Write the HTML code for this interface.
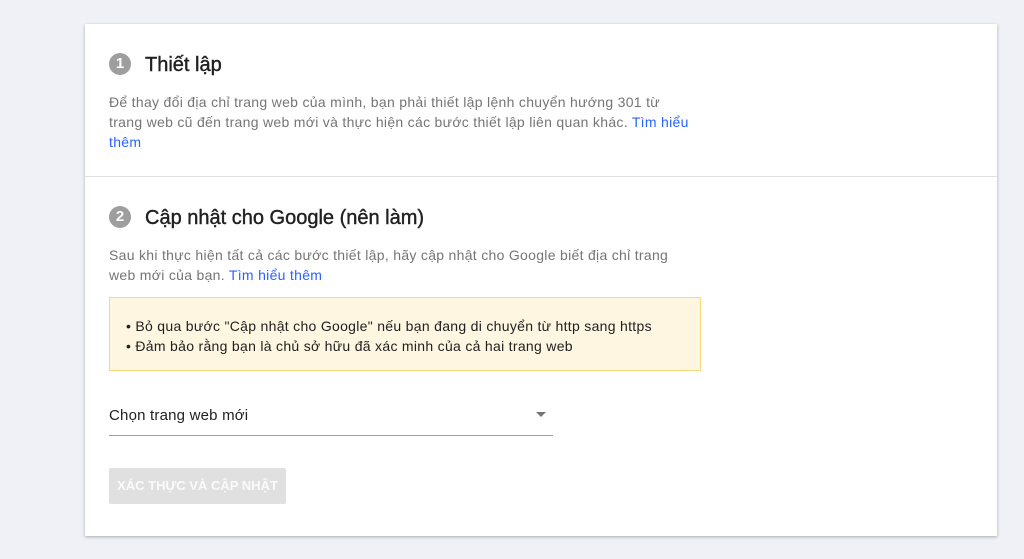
<!DOCTYPE html>
<html><head><meta charset="utf-8"><style>
*{margin:0;padding:0;box-sizing:border-box}
body{width:1024px;height:559px;background:#eff1f6;font-family:"Liberation Sans",Roboto,sans-serif;position:relative;overflow:hidden}
.card{position:absolute;left:85px;top:24px;width:912px;height:512px;background:#fff;box-shadow:0 1px 3px rgba(0,0,0,.3)}
.div{position:absolute;left:0;right:0;top:152px;height:1px;background:#e0e0e0}
.num{position:absolute;width:22px;height:22px;border-radius:50%;background:#9e9e9e;color:#fff;font-size:15px;font-weight:bold;text-align:center;line-height:22px}
.h{position:absolute;font-size:20px;color:#212121;-webkit-text-stroke:0.4px #212121;white-space:nowrap}
.p{position:absolute;left:24px;width:700px;font-size:14px;line-height:20px;color:#757575;letter-spacing:0.3px;white-space:nowrap}
a{color:#2962ff;text-decoration:none}
.warn{position:absolute;left:24px;top:273px;width:592px;height:74px;background:#fef6e0;border:1px solid #f9d97d;padding:18px 0 0 16px;font-size:14px;line-height:20px;color:#212121;letter-spacing:0.3px}
.sel{position:absolute;left:24px;top:380px;width:444px;height:32px;border-bottom:1px solid #9e9e9e;font-size:15px;color:#212121;letter-spacing:0.2px}
.arr{position:absolute;right:7px;top:8px;width:0;height:0;border-left:5px solid transparent;border-right:5px solid transparent;border-top:5px solid #757575}
.btn{position:absolute;left:24px;top:444px;width:177px;height:36px;background:#e0e0e0;border-radius:2px;color:#fafafa;font-size:13px;font-weight:bold;text-align:center;line-height:36px}
</style></head><body>
<div class="card">
<div class="num" style="left:24px;top:29px">1</div>
<div class="h" style="left:60px;top:30px">Thiết lập</div>
<div class="p" style="top:68px">Để thay đổi địa chỉ trang web của mình, bạn phải thiết lập lệnh chuyển hướng 301 từ<br>trang web cũ đến trang web mới và thực hiện các bước thiết lập liên quan khác. <a>Tìm hiểu</a><br><a>thêm</a></div>
<div class="div"></div>
<div class="num" style="left:24px;top:182px">2</div>
<div class="h" style="left:60px;top:183px">Cập nhật cho Google (nên làm)</div>
<div class="p" style="top:221px">Sau khi thực hiện tất cả các bước thiết lập, hãy cập nhật cho Google biết địa chỉ trang<br>web mới của bạn. <a>Tìm hiểu thêm</a></div>
<div class="warn">• Bỏ qua bước "Cập nhật cho Google" nếu bạn đang di chuyển từ http sang https<br>• Đảm bảo rằng bạn là chủ sở hữu đã xác minh của cả hai trang web</div>
<div class="sel"><span style="position:absolute;top:3px">Chọn trang web mới</span><div class="arr"></div></div>
<div class="btn">XÁC THỰC VÀ CẬP NHẬT</div>
</div>
</body></html>
